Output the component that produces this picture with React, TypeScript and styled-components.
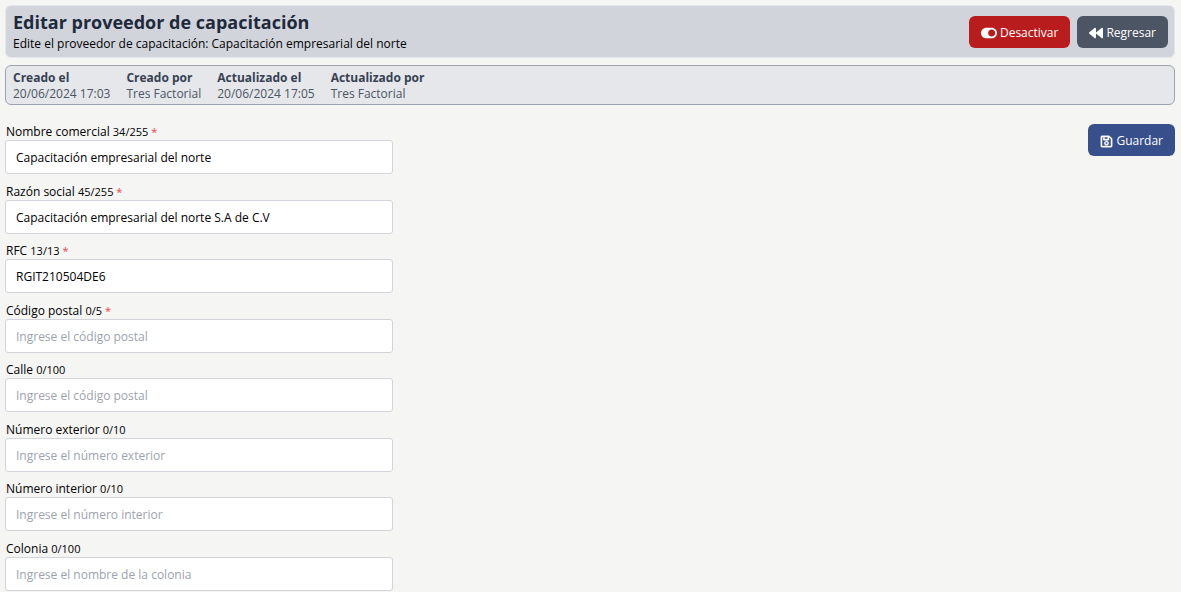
import React, { useState } from "react";
import styled, { createGlobalStyle } from "styled-components";
import { FaBackward, FaRegSave, FaToggleOn } from "react-icons/fa";

const GlobalStyle = createGlobalStyle`
  *, *::before, *::after { box-sizing: border-box; }
  body {
    margin: 0;
    background: #f5f5f4;
    color: #000;
    font-family: "Segoe UI", "Open Sans", "Noto Sans", sans-serif;
    font-size: 12px;
    line-height: 16px;
  }
  button, input { font: inherit; }
`;

const Page = styled.main`
  display: flex;
  flex-direction: column;
  gap: 7px;
  padding: 5px 6px 1px 5px;
`;

const Header = styled.header`
  display: flex;
  align-items: center;
  justify-content: space-between;
  padding: 5px 6px 5px 7px;
  border: 1px solid #e5e7eb;
  border-radius: 6px;
  background: #d1d5db;
`;

const Title = styled.h1`
  margin: 0 0 3px;
  color: #1e293b;
  font-size: 18px;
  font-weight: 700;
  line-height: 22px;
`;

const Subtitle = styled.p`
  margin: 0;
`;

const Actions = styled.div`
  display: flex;
  gap: 7px;
`;

const Button = styled.button<{ $color: string }>`
  display: inline-flex;
  align-items: center;
  gap: 3px;
  height: 32px;
  padding: 2px 12px 0;
  border: 0;
  border-radius: 6px;
  background: ${(p) => p.$color};
  color: #fff;
  white-space: nowrap;
  cursor: pointer;
`;

const SaveIcon = styled(FaRegSave)`
  stroke: currentColor;
  stroke-width: 16px;
`;

const Audit = styled.dl`
  display: flex;
  gap: 16px;
  margin: 0;
  padding: 4px 7px 2px;
  border: 1px solid #9ca3af;
  border-radius: 6px;
  background: #e5e7eb;
`;

const AuditLabel = styled.dt`
  color: #374151;
  font-weight: 700;
`;

const AuditValue = styled.dd`
  margin: 0;
  color: #4b5563;
`;

const Form = styled.form`
  display: flex;
  align-items: flex-start;
  justify-content: space-between;
  padding-top: 12px;
`;

const Fields = styled.div`
  display: flex;
  flex-direction: column;
  gap: 9px;
  width: 33.2%;
`;

const FieldPair = styled.div`
  display: flex;
  flex-direction: column;
  gap: 10px;
`;

const FieldBox = styled.div`
  display: flex;
  flex-direction: column;
`;

const Label = styled.label`
  padding-left: 1px;
`;

const Counter = styled.small`
  font-size: 11px;
`;

const Required = styled.span`
  color: #ef4444;
  font-size: 11px;
`;

const TextInput = styled.input`
  width: 100%;
  height: 34px;
  padding: 0 10px;
  border: 1px solid #d1d5db;
  border-radius: 3px;
  background: #fff;
  color: #000;
  &::placeholder { color: #9ca3af; opacity: 1; }
`;

type FieldData = {
  id: string;
  label: string;
  max: number;
  required?: boolean;
  value?: string;
  placeholder?: string;
};

const fieldPairs: FieldData[][] = [
  [
    { id: "nombre", label: "Nombre comercial", max: 255, required: true, value: "Capacitación empresarial del norte" },
    { id: "razon", label: "Razón social", max: 255, required: true, value: "Capacitación empresarial del norte S.A de C.V" },
  ],
  [
    { id: "rfc", label: "RFC", max: 13, required: true, value: "RGIT210504DE6" },
    { id: "cp", label: "Código postal", max: 5, required: true, placeholder: "Ingrese el código postal" },
  ],
  [
    { id: "calle", label: "Calle", max: 100, placeholder: "Ingrese el código postal" },
    { id: "exterior", label: "Número exterior", max: 10, placeholder: "Ingrese el número exterior" },
  ],
  [
    { id: "interior", label: "Número interior", max: 10, placeholder: "Ingrese el número interior" },
    { id: "colonia", label: "Colonia", max: 100, placeholder: "Ingrese el nombre de la colonia" },
  ],
];

const audit = [
  ["Creado el", "20/06/2024 17:03"],
  ["Creado por", "Tres Factorial"],
  ["Actualizado el", "20/06/2024 17:05"],
  ["Actualizado por", "Tres Factorial"],
];

function Field({ id, label, max, required, value = "", placeholder }: FieldData) {
  const [text, setText] = useState(value);
  return (
    <FieldBox>
      <Label htmlFor={id}>
        {label} <Counter>{text.length}/{max}</Counter>
        {required && <Required> *</Required>}
      </Label>
      <TextInput
        id={id}
        type="text"
        maxLength={max}
        required={required}
        value={text}
        placeholder={placeholder}
        onChange={(e) => setText(e.target.value)}
      />
    </FieldBox>
  );
}

export default function App() {
  return (
    <>
      <GlobalStyle />
      <Page>
        <Header>
          <div>
            <Title>Editar proveedor de capacitación</Title>
            <Subtitle>Edite el proveedor de capacitación: Capacitación empresarial del norte</Subtitle>
          </div>
          <Actions>
            <Button type="button" $color="#b91c1c"><FaToggleOn size={16} />Desactivar</Button>
            <Button type="button" $color="#4b5563"><FaBackward size={14} />Regresar</Button>
          </Actions>
        </Header>
        <Audit>
          {audit.map(([label, value]) => (
            <div key={label}>
              <AuditLabel>{label}</AuditLabel>
              <AuditValue>{value}</AuditValue>
            </div>
          ))}
        </Audit>
        <Form onSubmit={(e) => e.preventDefault()}>
          <Fields>
            {fieldPairs.map((pair) => (
              <FieldPair key={pair[0].id}>
                {pair.map((field) => <Field key={field.id} {...field} />)}
              </FieldPair>
            ))}
          </Fields>
          <Button type="submit" $color="#374f8a"><SaveIcon size={13} />Guardar</Button>
        </Form>
      </Page>
    </>
  );
}
